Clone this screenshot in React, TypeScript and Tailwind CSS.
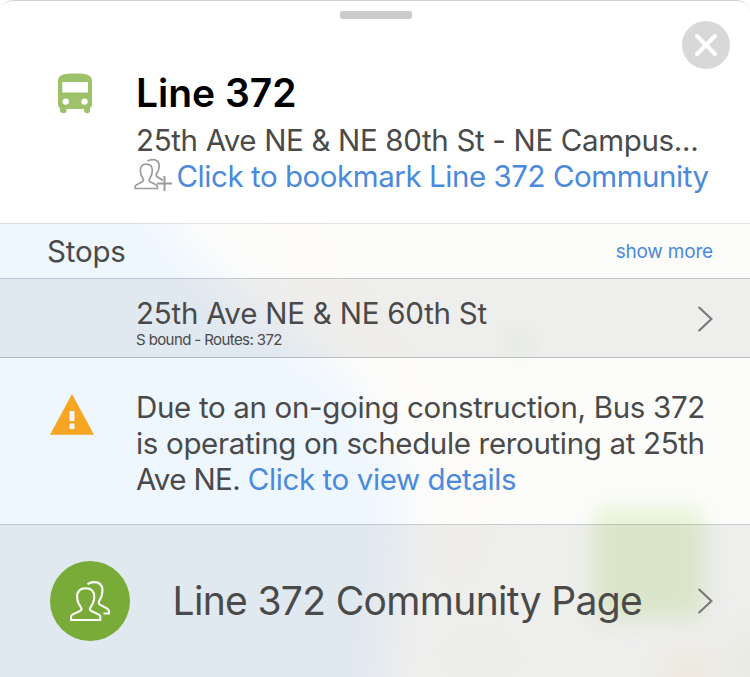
import React from "react";

function MapBackdrop() {
  return (
    <svg
      className="absolute inset-0 h-full w-full"
      viewBox="0 0 750 454"
      preserveAspectRatio="none"
      aria-hidden="true"
    >
      <defs>
        <filter id="soft" x="-50%" y="-50%" width="200%" height="200%">
          <feGaussianBlur stdDeviation="20" />
        </filter>
        <filter id="park" x="-50%" y="-50%" width="200%" height="200%">
          <feGaussianBlur stdDeviation="11" />
        </filter>
      </defs>
      <rect width="750" height="454" fill="#fcfcfb" />
      <g filter="url(#soft)">
        <path d="M250 -60L300 50L365 125L440 205L455 285L440 360L470 360L480 285L445 185L345 60L290 -60Z" fill="#fcfaf4" />
        <path d="M-80 -60H130C170 10 200 50 285 110C345 155 385 195 398 270C408 330 382 370 376 520H-80Z" fill="#eef6fe" />
        <ellipse cx="690" cy="2" rx="28" ry="10" fill="#f7fbf0" />
        <ellipse cx="480" cy="250" rx="24" ry="50" fill="#fcfbf6" />
        <ellipse cx="688" cy="455" rx="20" ry="26" fill="#fbf3df" />
        <ellipse cx="755" cy="440" rx="16" ry="30" fill="#f1f5e4" />
        <ellipse cx="480" cy="435" rx="30" ry="22" fill="#faf9f4" />
      </g>
      <circle cx="518" cy="122" r="12" fill="#f1f6ea" filter="url(#park)" />
      <rect x="594" y="284" width="110" height="112" rx="8" fill="#e7f3d5" filter="url(#park)" />
    </svg>
  );
}

function Bus() {
  return (
    <svg className="block" width="34" height="41" viewBox="0 0 34 41" aria-hidden="true">
      <path
        fillRule="evenodd"
        fill="#9dc26a"
        d="M0 8C0 2.2 5 .5 17 .5S34 2.2 34 8V31C34 33 33.2 34.5 32 35.3V37.5C32 39.3 31 40.3 29 40.3S26 39.3 26 37.5V36H8.5V37.5C8.5 39.3 7.500 40.3 5.500 40.300S2 39.300 2 37.500V35.300C.8 34.500 0 33 0 31ZM4.300 9V19.500H30V9ZM7.700 25.400A3.200 3.200 0 1 0 7.700 31.800A3.200 3.200 0 1 0 7.700 25.400ZM26.500 25.400A3.200 3.200 0 1 0 26.500 31.800A3.200 3.200 0 1 0 26.500 25.400Z"
      />
    </svg>
  );
}

function AddPeople() {
  return (
    <svg className="block shrink-0" width="39" height="34" viewBox="0 0 39 34" fill="none" stroke="#9b9b9b" strokeWidth="1.700" aria-hidden="true">
      <path d="M1.200 30.500V28.800C1.200 27.800 1.700 27.200 2.600 26.700L8 24C9.800 23.100 9.800 22.300 8.900 20.800C7 17.800 6.300 15.500 6.300 12.500C6.300 8.300 8.400 6.200 12.300 6.200S18.300 8.300 18.300 12.500C18.300 15.500 17.600 17.800 15.700 20.800C14.800 22.300 14.800 23.100 16.600 24L22 26.700C22.900 27.200 23.400 27.800 23.400 28.800V30.500Z" />
      <path d="M13.500 3C15 1.900 16.700 1.600 18.800 1.600C23.200 1.600 25.200 4 25.200 8C25.200 11 24.300 13.200 22.700 15.500C21.800 17 22 18 23.200 18.800L29 22.500" />
      <path d="M30.500 18V33M23 25.500H38" strokeWidth="2" />
    </svg>
  );
}

function People() {
  return (
    <svg className="block" width="40" height="42" viewBox="0 0 40 42" fill="none" stroke="#fff" strokeWidth="2.100" aria-hidden="true">
      <path d="M1 40V37C1 35.700 1.700 35 2.800 34.400L9.500 31.200C12 30 12 29 10.700 27C8.200 23.300 7.100 20.500 7.100 17C7.100 11.500 9.800 8.300 15.600 8.300S24.300 11.500 24.300 17C24.300 20.500 23.200 23.300 20.700 27C19.400 29 19.500 30 21.900 31.200L28.500 34.400C29.700 35 30.300 35.700 30.300 37V40Z" />
      <path d="M17.500 4.200C19.400 2.700 21.400 2.100 24.200 2.100C30.200 2.100 32.500 5.500 32.500 11C32.500 14.800 31.500 17.500 29.400 20.600C28.300 22.500 28.400 23.700 29.900 24.600L37.200 28.600C38.300 29.300 38.900 29.800 38.900 31V33.500H33.500" />
    </svg>
  );
}

function Chevron() {
  return (
    <svg className="block shrink-0" width="17" height="28" viewBox="0 0 17 28" fill="none" stroke="#777" strokeWidth="2.100" strokeLinecap="round" aria-hidden="true">
      <path d="M2.200 2.500L14.400 14L2.200 25.500" />
    </svg>
  );
}

export default function App() {
  return (
    <main className="flex h-[677px] w-[750px] flex-col overflow-hidden rounded-t-[13px] bg-white font-['Inter','Liberation_Sans',sans-serif] text-[29.5px] leading-9 text-[#4a4a4a]">
      <header className="relative h-[223px] shrink-0 rounded-t-[13px] border-t border-[#d2d2d2] pt-[10px]">
        <div className="mx-auto h-2 w-[72px] translate-x-[1px] rounded-[2px] bg-[#cbcbcb]" />
        <button aria-label="Close" className="absolute top-5 right-5 flex h-12 w-12 items-center justify-center rounded-full bg-[#d8d8d8]">
          <svg width="24" height="24" viewBox="0 0 24 24" stroke="#fff" strokeWidth="4" strokeLinecap="round" aria-hidden="true">
            <path d="M3 3L21 21M21 3L3 21" />
          </svg>
        </button>
        <div className="flex pt-[49px]">
          <div className="w-[136px] shrink-0 pt-[5px] pl-[58px]">
            <Bus />
          </div>
          <div className="whitespace-nowrap">
            <h1 className="h-[54px] text-[39px] leading-[50px] font-semibold text-black">Line 372</h1>
            <p className="tracking-[-0.33px]">25th Ave NE &amp; NE 80th St - NE Campus...</p>
            <div className="flex">
              <div className="-ml-[2px] w-[42.5px]"><AddPeople /></div>
              <a className="tracking-[-0.45px] text-[#4a89dc]">Click to bookmark Line 372 Community</a>
            </div>
          </div>
        </div>
      </header>
      <div className="relative h-[454px] shrink-0">
        <MapBackdrop />
        <div className="relative flex h-full flex-col">
          <section className="flex h-[56px] items-center justify-between border-y border-t-black/10 border-b-[#234]/25 pr-[37px] pl-[47px]">
            <h2 className="tracking-[-0.2px]">Stops</h2>
            <a className="pt-px text-[19px] tracking-[-0.2px] text-[#4a89dc]">show more</a>
          </section>
          <section className="flex h-[79px] justify-between border-b border-b-[#234]/25 bg-black/[0.055] pr-9 pl-[136px]">
            <div className="pt-4">
              <div className="tracking-[-0.22px]">25th Ave NE &amp; NE 60th St</div>
              <div className="text-[15px] leading-[18px] tracking-[-0.6px]">S bound - Routes: 372</div>
            </div>
            <div className="pt-[26px]"><Chevron /></div>
          </section>
          <section className="flex h-[167px] border-b border-b-[#234]/25 pt-[31px]">
            <div className="w-[136px] shrink-0 pt-[5px] pl-[50px]">
              <svg className="block" width="44" height="41" viewBox="0 0 44 41" aria-hidden="true">
                <path d="M22 0L44 40.700H0Z" fill="#f6a623" />
                <path d="M19.500 17H24.500V27H19.500ZM19.500 29.500H24.500V35H19.500Z" fill="#f1f6fb" />
              </svg>
            </div>
            <p className="whitespace-nowrap tracking-[-0.33px]">
              Due to an on-going construction, Bus 372<br />
              is operating on schedule rerouting at 25th<br />
              <span className="tracking-[-0.6px]">Ave NE. </span>
              <a className="tracking-[-0.4px] text-[#4a89dc]">Click to view details</a>
            </p>
          </section>
          <section className="flex flex-1 items-center bg-black/[0.055] pr-9 pl-[50px]">
            <div className="flex h-20 w-20 shrink-0 items-center justify-center rounded-full bg-[#79ab38]">
              <People />
            </div>
            <div className="ml-[42.5px] flex-1 text-[39px] leading-[50px] tracking-[-0.66px] whitespace-nowrap">Line 372 Community Page</div>
            <Chevron />
          </section>
        </div>
      </div>
    </main>
  );
}
